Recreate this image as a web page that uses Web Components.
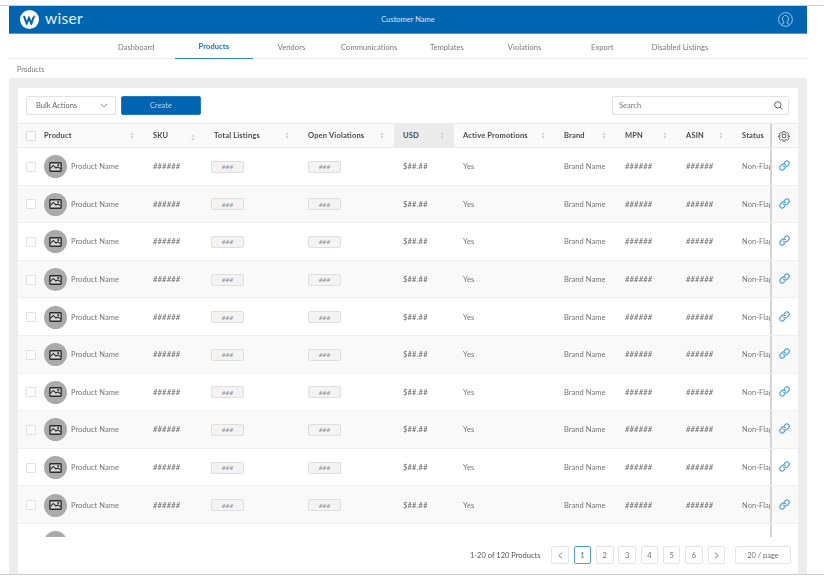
<!DOCTYPE html>
<html>
<head>
<meta charset="utf-8">
<title>Products</title>
<style>
	html, body { margin: 0; padding: 0; background: #fff; }
	body { width: 824px; height: 580px; overflow: hidden; font-family: Lato, "Open Sans", sans-serif; color: #6f6f6f; }
</style>
</head>
<body>
<wiser-app></wiser-app>
<script>
const icons = {
	sort: `<svg width="4" height="7" viewBox="0 0 5 8"><path d="M2.5 0 L4.6 3 H.4 Z M2.5 8 L.4 5 H4.6 Z" fill="#cfcfcf"/></svg>`,
	chevronDown: `<svg width="8" height="5" viewBox="0 0 10 6"><path d="M1 1 L5 5 L9 1" fill="none" stroke="#8a8a8a" stroke-width="1.1"/></svg>`,
	search: `<svg width="9" height="9" viewBox="0 0 11 11"><circle cx="4.7" cy="4.7" r="3.9" fill="none" stroke="#555" stroke-width="1.1"/><path d="M7.5 7.5 L10.4 10.4" stroke="#555" stroke-width="1.1"/></svg>`,
	user: `<svg width="15" height="15" viewBox="0 0 15 15" fill="none" stroke="#a9cbe6" stroke-width=".9"><circle cx="7.5" cy="7.5" r="6.9"/><path d="M5.9 10.2 C4.6 8.6 4.4 7.4 4.6 6 C4.9 4.3 6 3.5 7.5 3.5 C9 3.5 10.1 4.3 10.4 6 C10.6 7.4 10.4 8.6 9.1 10.2 V11 L11.6 12.4 M5.9 10.2 V11 L3.4 12.4"/></svg>`,
	image: `<svg width="13" height="10" viewBox="0 0 14 11"><rect x=".8" y=".8" width="12.4" height="9.4" rx=".8" fill="#d8d8d8" stroke="#2c2c2c" stroke-width="1.5"/><path d="M1.5 7 L4.5 3.8 L7.5 6.6 L9.5 5.4 L12.5 7.4" fill="none" stroke="#2c2c2c" stroke-width="1.2"/><circle cx="10" cy="3.2" r="1.1" fill="#2c2c2c"/></svg>`,
	gear: `<svg width="12" height="12" viewBox="0 0 24 24" fill="none" stroke="#555" stroke-width="2"><circle cx="12" cy="12" r="3.8"/><path d="M10 1.6 h4 l.7 3.2 2.3 1 2.8-1.8 2.8 2.8-1.8 2.8 1 2.3 3.2.7 v0 l-3.2.7-1 2.3 1.8 2.8-2.8 2.8-2.8-1.8-2.3 1-.7 3.2 h-4 l-.7-3.2-2.3-1-2.8 1.8-2.8-2.8 1.8-2.8-1-2.3-3.2-.7 v0 l3.2-.7 1-2.3-1.8-2.8 2.8-2.8 2.8 1.8 2.3-1 Z" stroke-linejoin="round" transform="translate(1.2 1.2) scale(.9)"/></svg>`,
	link: `<svg width="11" height="11" viewBox="0 0 24 24" fill="none" stroke="#3a96da" stroke-width="2.4" stroke-linecap="round"><path d="M10 13.5 a5 5 0 0 0 7.5.5 l3.4-3.4 a5 5 0 0 0-7.1-7.1 l-2 2"/><path d="M14 10.5 a5 5 0 0 0-7.5-.5 l-3.4 3.4 a5 5 0 0 0 7.1 7.1 l2-2"/></svg>`,
	left: `<svg width="5" height="7" viewBox="0 0 6 8"><path d="M5 .5 L1 4 L5 7.5" fill="none" stroke="#666" stroke-width="1"/></svg>`,
	right: `<svg width="5" height="7" viewBox="0 0 6 8"><path d="M1 .5 L5 4 L1 7.5" fill="none" stroke="#666" stroke-width="1"/></svg>`
}

class WiserHeader extends HTMLElement {
	constructor() {
		super()
		this.attachShadow({ mode: 'open' }).innerHTML = `
			<style>
				:host {
					display: grid;
					grid-template-columns: 1fr auto 1fr;
					align-items: center;
					height: 27px;
					background: #0065b0;
					border-bottom: 1px solid #4a97d2;
					color: #d5e6f4;
					font-size: 7.5px;
				}
				.brand { display: flex; align-items: center; gap: 6px; padding-left: 11px; }
				.logo { width: 19px; height: 19px; border-radius: 50%; background: #fff; display: flex; align-items: center; justify-content: center; }
				.word { font-size: 15.5px; letter-spacing: .3px; color: #e8f1f9; line-height: 1; position: relative; top: -1px; }
				.user { justify-self: end; padding-right: 14px; display: flex; }
			</style>
			<div class="brand">
				<span class="logo"><svg width="13" height="10" viewBox="0 0 13 10"><path d="M1 1 L3.6 8.5 L6 3 L8.4 8.5 L10.6 2" fill="none" stroke="#0065b0" stroke-width="2"/><circle cx="11.2" cy="1.6" r="1.2" fill="#e2553d"/></svg></span>
				<span class="word">wiser</span>
			</div>
			<div>Customer Name</div>
			<div class="user">${icons.user}</div>`
	}
}

class WiserNav extends HTMLElement {
	constructor() {
		super()
		const items = ['Dashboard', 'Products', 'Vendors', 'Communications', 'Templates', 'Violations', 'Export', 'Disabled Listings']
		this.attachShadow({ mode: 'open' }).innerHTML = `
			<style>
				:host {
					display: grid;
					grid-template-columns: repeat(8, 77.7px);
					justify-content: start;
					padding-left: 88.3px;
					height: 25px;
					box-sizing: border-box;
					border-bottom: 1px solid #ececec;
					font-size: 7.5px;
					letter-spacing: .08px;
					color: #777;
				}
				div { display: flex; align-items: center; justify-content: center; height: 25px; box-sizing: border-box; padding-top: 1px; white-space: nowrap; }
				.active { color: #0f74bd; font-weight: 700; border-bottom: 1px solid #2a86c8; }
			</style>
			${items.map(item => `<div class="${item === 'Products' ? 'active' : ''}">${item}</div>`).join('')}`
	}
}

class WiserBreadcrumb extends HTMLElement {
	constructor() {
		super()
		this.attachShadow({ mode: 'open' }).innerHTML = `
			<style>
				:host { display: flex; align-items: center; height: 19px; padding-left: 8px; font-size: 7px; color: #777; }
			</style>
			<slot></slot>`
	}
}

class ProductToolbar extends HTMLElement {
	constructor() {
		super()
		this.attachShadow({ mode: 'open' }).innerHTML = `
			<style>
				:host { display: flex; align-items: center; height: 35px; box-sizing: border-box; padding: 0 9px 0 8px; gap: 5px; font-size: 7.5px; }
				.select, .search, .create { height: 19px; box-sizing: border-box; display: flex; align-items: center; border-radius: 2px; }
				.select { width: 90px; border: 1px solid #e2e2e2; padding: 0 7px 0 9px; justify-content: space-between; color: #666; }
				.create { width: 80px; justify-content: center; background: #0065b0; border: 1px solid #1f7cc0; color: #b9d6ec; }
				.search { width: 177px; margin-left: auto; border: 1px solid #e2e2e2; padding: 0 5px 0 6px; justify-content: space-between; color: #777; }
			</style>
			<div class="select"><span>Bulk Actions</span>${icons.chevronDown}</div>
			<div class="create">Create</div>
			<div class="search"><span>Search</span>${icons.search}</div>`
	}
}

const columnTemplate = '26px 100px 61px 94px 95px 60px 101px 61px 61px 56px 37px 28px'

class ProductHead extends HTMLElement {
	constructor() {
		super()
		const cols = ['Product', 'SKU', 'Total Listings', 'Open Violations', 'USD', 'Active Promotions', 'Brand', 'MPN', 'ASIN']
		this.attachShadow({ mode: 'open' }).innerHTML = `
			<style>
				:host {
					display: grid;
					grid-template-columns: ${columnTemplate};
					height: 25px;
					box-sizing: border-box;
					background: #fafafa;
					border-top: 1px solid #ececec;
					border-bottom: 1px solid #ececec;
					font-size: 7.5px;
					font-weight: 700;
					letter-spacing: .18px;
					color: #4a4a4a;
				}
				.cell { display: flex; align-items: center; justify-content: space-between; padding: 0 10px 0 9px; white-space: nowrap; }
				.first { padding-left: 0; }
				.usd { background: #ebebeb; }
				.sku svg { position: relative; top: 2px; }
				.check { display: flex; align-items: center; padding-left: 8px; }
				.box { width: 10px; height: 10px; box-sizing: border-box; border: 1px solid #dcdcdc; background: #fff; border-radius: 1px; }
				.status { padding-right: 0; overflow: hidden; }
				.gear { display: flex; align-items: center; justify-content: center; border-left: 2px solid #d4d4d4; box-sizing: border-box; padding-right: 2px; }
			</style>
			<div class="check"><span class="box"></span></div>
			${cols.map((label, i) => `<div class="cell ${i === 0 ? 'first' : ''} ${label === 'USD' ? 'usd' : ''} ${label === 'SKU' ? 'sku' : ''}"><span>${label}</span>${icons.sort}</div>`).join('')}
			<div class="cell status"><span>Status</span></div>
			<div class="gear">${icons.gear}</div>`
	}
}

class ProductRow extends HTMLElement {
	constructor() {
		super()
		this.attachShadow({ mode: 'open' }).innerHTML = `
			<style>
				:host {
					display: grid;
					grid-template-columns: ${columnTemplate};
					height: 37.6px;
					box-sizing: border-box;
					padding-top: 1px;
					border-bottom: 1px solid #f0f0f0;
					font-size: 7.5px;
					letter-spacing: .05px;
					color: #747474;
					background: #fff;
				}
				:host([striped]) { background: #f9f9f9; }
				:host([clipped]) .action svg { display: none; }
				.cell { display: flex; align-items: center; padding-left: 9px; white-space: nowrap; overflow: hidden; }
				.check { display: flex; align-items: center; padding-left: 8px; }
				.box { width: 10px; height: 10px; box-sizing: border-box; border: 1px solid #e2e2e2; background: #fff; border-radius: 1px; }
				.product { padding-left: 0; gap: 4px; }
				.thumb { width: 23px; height: 23px; border-radius: 50%; background: #aaa; display: flex; align-items: center; justify-content: center; flex: none; }
				.hash { font-style: italic; color: #666; letter-spacing: .2px; }
				.usd { font-style: normal; }
				.badge { width: 33px; height: 12px; box-sizing: border-box; display: flex; align-items: center; justify-content: center; background: #f3f3f3; border: 1px solid #dedede; border-radius: 2px; font-size: 6.5px; color: #8a8a8a; font-style: italic; }
				.listings { padding-left: 6px; }
				.action { display: flex; align-items: center; justify-content: center; border-left: 2px solid #d4d4d4; box-sizing: border-box; padding: 0 2px 1px 0; margin-top: -1px; }
			</style>
			<div class="check"><span class="box"></span></div>
			<div class="cell product"><span class="thumb">${icons.image}</span><span>Product Name</span></div>
			<div class="cell hash">######</div>
			<div class="cell listings"><span class="badge">###</span></div>
			<div class="cell"><span class="badge">###</span></div>
			<div class="cell hash usd">$##.##</div>
			<div class="cell">Yes</div>
			<div class="cell">Brand Name</div>
			<div class="cell hash">######</div>
			<div class="cell hash">######</div>
			<div class="cell">Non-Flagged</div>
			<div class="action">${icons.link}</div>`
	}
}

class ProductTable extends HTMLElement {
	constructor() {
		super()
		this.attachShadow({ mode: 'open' }).innerHTML = `
			<style>
				:host { display: block; height: 414px; overflow: hidden; }
			</style>
			<product-head></product-head>
			${Array.from({ length: 11 }, (_, i) => `<product-row ${i % 2 ? 'striped' : ''} ${i === 10 ? 'clipped' : ''}></product-row>`).join('')}`
	}
}

class TablePager extends HTMLElement {
	constructor() {
		super()
		const pages = [icons.left, 1, 2, 3, 4, 5, 6, icons.right]
		this.attachShadow({ mode: 'open' }).innerHTML = `
			<style>
				:host { display: flex; align-items: center; justify-content: flex-end; height: 37px; box-sizing: border-box; padding: 0 7px 1px 0; font-size: 7.5px; color: #6f6f6f; background: #fff; }
				.total { margin-right: 11px; color: #555; }
				.pages { display: flex; gap: 4.8px; margin-right: 10px; }
				.page { width: 17.5px; height: 18px; box-sizing: border-box; display: flex; align-items: center; justify-content: center; border: 1px solid #e4e4e4; border-radius: 2px; }
				.page.on { border-color: #4d9fd9; color: #2a86c8; }
				.size { width: 56px; height: 18px; box-sizing: border-box; display: flex; align-items: center; justify-content: center; border: 1px solid #e4e4e4; border-radius: 2px; }
			</style>
			<span class="total">1-20 of 120 Products</span>
			<div class="pages">${pages.map(p => `<span class="page ${p === 1 ? 'on' : ''}">${p}</span>`).join('')}</div>
			<div class="size">20 / page</div>`
	}
}

class WiserApp extends HTMLElement {
	constructor() {
		super()
		this.attachShadow({ mode: 'open' }).innerHTML = `
			<style>
				:host { display: block; border-top: 1px solid #cfcfcf; margin-top: 5px; height: 570px; box-sizing: border-box; border-bottom: 1px solid #cfcfcf; filter: blur(.3px); }
				.page { width: 798px; margin-left: 9px; height: 100%; display: flex; flex-direction: column; }
				.content { flex: 1; background: #ededed; padding: 10px 9px 0; min-height: 0; }
				.card { background: #fff; height: 100%; }
			</style>
			<div class="page">
				<wiser-header></wiser-header>
				<wiser-nav></wiser-nav>
				<wiser-breadcrumb>Products</wiser-breadcrumb>
				<div class="content">
					<div class="card">
						<product-toolbar></product-toolbar>
						<product-table></product-table>
						<table-pager></table-pager>
					</div>
				</div>
			</div>`
	}
}

customElements.define('wiser-header', WiserHeader)
customElements.define('wiser-nav', WiserNav)
customElements.define('wiser-breadcrumb', WiserBreadcrumb)
customElements.define('product-toolbar', ProductToolbar)
customElements.define('product-head', ProductHead)
customElements.define('product-row', ProductRow)
customElements.define('product-table', ProductTable)
customElements.define('table-pager', TablePager)
customElements.define('wiser-app', WiserApp)
</script>
</body>
</html>
